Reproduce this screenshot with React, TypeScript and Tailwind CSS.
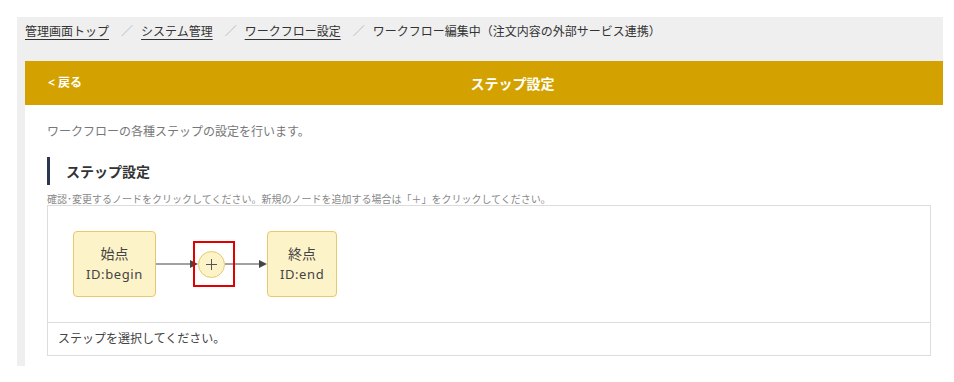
import React from "react";

const font = { fontFamily: '"Noto Sans", "Noto Sans CJK JP", sans-serif' };

function Arrow({ width }: { width: number }) {
  return (
    <svg width={width} height="10" viewBox={`0 0 ${width} 10`} className="block">
      <line x1="0" y1="5" x2={width - 7} y2="5" stroke="#444" strokeWidth="1" />
      <polygon points={`${width - 8},1 ${width},5 ${width - 8},9`} fill="#444" />
    </svg>
  );
}

function Node({ title, id }: { title: string; id: string }) {
  return (
    <div className="flex h-[66px] flex-col items-center justify-center rounded-[4px] border border-[#e8c86a] bg-[#fdf3c9] px-[12px] text-[13px] leading-[21px] text-[#444]">
      <div className="text-[14px]">{title}</div>
      <div className="tracking-[0.6px]">{id}</div>
    </div>
  );
}

function Sep() {
  return <span className="mx-[8px] text-[#bbb]">／</span>;
}

export default function App() {
  return (
    <div className="min-h-[382px] bg-white pl-[17px] pr-[11px] pt-[17px]" style={font}>
      <div className="bg-[#efefef] pl-[8px] pb-0">
        <div className="flex h-[28px] items-center text-[12px] text-[#333]" style={{ fontFamily: '"Noto Sans CJK JP", sans-serif' }}>
          <span className="pr-[4px] underline underline-offset-[3px] decoration-[#333]">管理画面トップ</span>
          <Sep />
          <span className="pr-[4px] underline underline-offset-[3px] decoration-[#333]">システム管理</span>
          <Sep />
          <span className="pr-[4px] underline underline-offset-[3px] decoration-[#333]">ワークフロー設定</span>
          <Sep />
          <span>ワークフロー編集中（注文内容の外部サービス連携）</span>
        </div>
        <div className="h-[16px]" />
        <div className="flex h-[44px] items-center bg-[#d4a200] pl-[23px] text-white">
          <span className="text-[12px] font-bold">&lt; 戻る</span>
          <span className="flex-1 text-center text-[14px] font-bold">ステップ設定</span>
        </div>
        <div className="h-[261px] bg-white pl-[22px] pr-[12px] pt-[18px]">
          <p className="text-[12px] leading-[18px] text-[#777]">ワークフローの各種ステップの設定を行います。</p>
          <div className="mt-[16px] flex h-[28px] items-center">
            <div className="h-[28px] w-[3px] bg-[#2b3650]" />
            <h2 className="ml-[16px] text-[14px] font-bold text-[#333]">ステップ設定</h2>
          </div>
          <p className="mt-[8px] text-[10px] leading-[12px] text-[#888]">
            確認･変更するノードをクリックしてください。新規のノードを追加する場合は「＋」をクリックしてください。
          </p>
          <div className="border border-[#ddd]">
            <div className="h-[116px] px-[25px] pt-[25px]">
              <div className="flex items-center">
                <Node title="始点" id="ID:begin" />
                <Arrow width={42} />
                <div className="relative">
                  <div className="flex h-[27px] w-[27px] items-center justify-center rounded-full border border-[#e8c86a] bg-[#fdf3c9]">
                    <svg width="11" height="11" viewBox="0 0 11 11">
                      <line x1="5.5" y1="0" x2="5.5" y2="11" stroke="#555" strokeWidth="1" />
                      <line x1="0" y1="5.5" x2="11" y2="5.5" stroke="#555" strokeWidth="1" />
                    </svg>
                  </div>
                  <div className="absolute left-[-5px] top-[-10px] h-[46px] w-[42px] border-2 border-[#e00000]" />
                </div>
                <Arrow width={42} />
                <Node title="終点" id="ID:end" />
              </div>
            </div>
            <div className="flex h-[33px] items-center border-t border-[#ddd] pl-[10px] text-[12px] text-[#444]">
              ステップを選択してください。
            </div>
          </div>
        </div>
      </div>
    </div>
  );
}
